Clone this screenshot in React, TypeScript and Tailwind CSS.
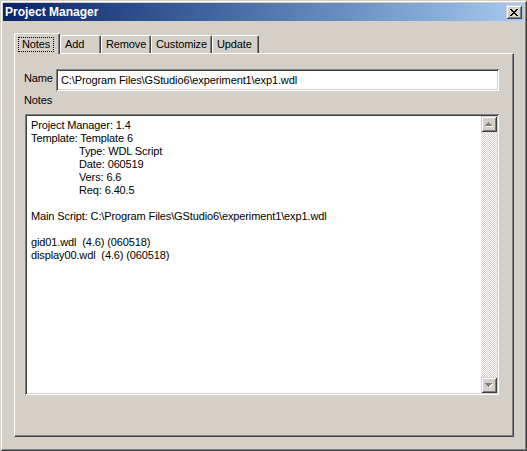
import React from "react";

const raised =
  "shadow-[inset_1px_1px_0_#d4d0c8,inset_-1px_-1px_0_#404040,inset_2px_2px_0_#ffffff,inset_-2px_-2px_0_#808080]";
const sunken =
  "shadow-[inset_1px_1px_0_#808080,inset_-1px_-1px_0_#ffffff,inset_2px_2px_0_#404040,inset_-2px_-2px_0_#d4d0c8]";

function CloseGlyph() {
  const rects: [number, number, number][] = [
    [0, 0, 2], [6, 0, 2],
    [1, 1, 2], [5, 1, 2],
    [2, 2, 4],
    [3, 3, 2],
    [2, 4, 4],
    [1, 5, 2], [5, 5, 2],
    [0, 6, 2], [6, 6, 2],
  ];
  return (
    <svg width="8" height="7" viewBox="0 0 8 7" shapeRendering="crispEdges">
      {rects.map(([x, y, w], i) => (
        <rect key={i} x={x} y={y} width={w} height={1} fill="#000" />
      ))}
    </svg>
  );
}

function Arrow({ down }: { down?: boolean }) {
  const rows = down
    ? [
        [0, 0, 7],
        [1, 1, 5],
        [2, 2, 3],
        [3, 3, 1],
      ]
    : [
        [3, 0, 1],
        [2, 1, 3],
        [1, 2, 5],
        [0, 3, 7],
      ];
  return (
    <svg width="8" height="5" viewBox="0 0 8 5" shapeRendering="crispEdges">
      {rows.map(([x, y, w], i) => (
        <rect key={"s" + i} x={x + 1} y={y + 1} width={w} height={1} fill="#ffffff" />
      ))}
      {rows.map(([x, y, w], i) => (
        <rect key={"g" + i} x={x} y={y} width={w} height={1} fill="#808080" />
      ))}
    </svg>
  );
}

function ScrollButton({ down }: { down?: boolean }) {
  return (
    <div className={`w-[16px] h-[16px] bg-[#d4d0c8] flex items-center justify-center ${raised}`}>
      <Arrow down={down} />
    </div>
  );
}

function Tab({ label, width }: { label: string; width: string }) {
  return (
    <div
      className={`${width} h-[18px] flex items-center pl-[4px] border-l border-t border-white border-r border-r-[#404040] rounded-t-[2px] shadow-[inset_-1px_0_0_#808080]`}
    >
      <span className="leading-[13px] whitespace-pre">{label}</span>
    </div>
  );
}

export default function App() {
  const lines: { t: string; indent?: boolean }[] = [
    { t: "Project Manager: 1.4" },
    { t: "Template: Template 6" },
    { t: "Type: WDL Script", indent: true },
    { t: "Date: 060519", indent: true },
    { t: "Vers: 6.6", indent: true },
    { t: "Req: 6.40.5", indent: true },
    { t: "" },
    { t: "Main Script: C:\\Program Files\\GStudio6\\experiment1\\exp1.wdl" },
    { t: "" },
    { t: "gid01.wdl  (4.6) (060518)" },
    { t: "display00.wdl  (4.6) (060518)" },
  ];

  return (
    <div
      className={`w-[527px] h-[451px] bg-[#d4d0c8] p-[3px] flex flex-col text-black text-[11px] tracking-[-0.12px] font-['Liberation_Sans',Arial,sans-serif] ${raised}`}
    >
      {/* Title bar */}
      <div className="h-[18px] flex items-center justify-between pl-[2px] pr-[2px] bg-linear-to-r from-[#0a246a] to-[#a6caf0]">
        <span className="text-white font-bold text-[12px] tracking-normal leading-[14px]">Project Manager</span>
        <div className={`w-[16px] h-[14px] bg-[#d4d0c8] flex items-center justify-center ${raised}`}>
          <CloseGlyph />
        </div>
      </div>

      {/* Body */}
      <div className="ml-[11px] mt-[12px] flex flex-col w-[500px]">
        {/* Tabs */}
        <div className="flex items-end h-[20px]">
          <div className="relative z-10 w-[46px] h-[21px] -mb-[1px] bg-[#d4d0c8] flex items-start pl-[3px] pt-[3px] border-l border-t border-white border-r border-r-[#404040] rounded-t-[2px] shadow-[inset_-1px_0_0_#808080]">
            <span className="border border-dotted border-black px-[3px] leading-[13px]">Notes</span>
          </div>
          <Tab label="Add" width="w-[41px]" />
          <Tab label="Remove" width="w-[50px]" />
          <Tab label="Customize" width="w-[61px]" />
          <Tab label="Update" width="w-[47px]" />
        </div>

        {/* Panel */}
        <div className="w-[500px] h-[384px] border-l border-t border-white border-r border-b border-r-[#404040] border-b-[#404040] shadow-[inset_-1px_-1px_0_#808080] pl-[9px] pt-[15px] flex flex-col">
          <div className="flex items-start">
            <span className="w-[32px] mt-[3px] leading-[13px]">Name</span>
            <div className={`w-[443px] h-[22px] bg-white flex items-center pl-[5px] ${sunken}`}>
              <span className="leading-[13px] whitespace-pre">C:\Program Files\GStudio6\experiment1\exp1.wdl</span>
            </div>
          </div>
          <span className="mt-[3px] leading-[13px]">Notes</span>
          <div className={`ml-[1px] mt-[7px] w-[474px] h-[281px] bg-white flex p-[2px] ${sunken}`}>
            <div className="flex-1 pl-[4px] pt-[3px] flex flex-col">
              {lines.map((l, i) => (
                <div key={i} className={`h-[13px] leading-[13px] whitespace-pre ${l.indent ? "pl-[48px]" : ""}`}>
                  {l.t}
                </div>
              ))}
            </div>
            <div className="w-[16px] flex flex-col">
              <ScrollButton />
              <div className="flex-1 bg-[repeating-conic-gradient(#ffffff_0%_25%,#d4d0c8_0%_50%)] bg-[length:2px_2px]" />
              <ScrollButton down />
            </div>
          </div>
        </div>
      </div>
    </div>
  );
}
